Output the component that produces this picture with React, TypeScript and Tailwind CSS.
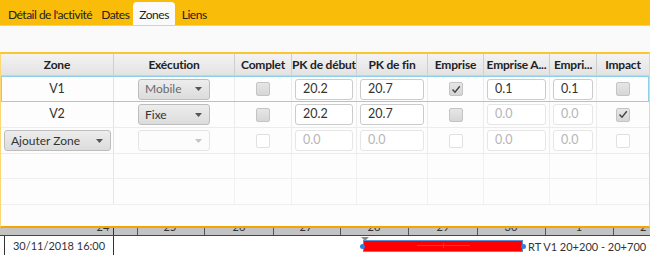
import React from "react";

const font = { fontFamily: 'Lato, "Noto Sans", Arial, sans-serif' };
const gridCols = "grid grid-cols-[113px_121px_57px_65px_71px_56px_66px_47px_1fr]";

const headers = ["Zone", "Exécution", "Complet", "PK de début", "PK de fin", "Emprise", "Emprise A...", "Empri...", "Impact"];

function Arrow({ light }: { light?: boolean }) {
  return (
    <svg width="7" height="4" viewBox="0 0 7 4" className="shrink-0">
      <path d="M0 0 L7 0 L3.5 4 Z" fill={light ? "#c4c4c4" : "#555"} />
    </svg>
  );
}

function Combo({ label, width, disabled, grayText }: { label?: string; width: string; disabled?: boolean; grayText?: boolean }) {
  return (
    <div
      className={`${width} h-[21px] flex items-center justify-between pl-[6px] pr-[7px] rounded-[3px] border text-[12px] ${
        disabled
          ? "border-[#e4e4e4] bg-[#fcfcfc]"
          : "border-[#bdbdbd] bg-gradient-to-b from-[#ededed] to-[#dcdcdc]"
      } ${grayText ? "text-[#6a6a6a]" : "text-[#333]"}`}
    >
      <span>{label}</span>
      <Arrow light={disabled} />
    </div>
  );
}

function Check({ checked, disabled }: { checked?: boolean; disabled?: boolean }) {
  return (
    <div
      className={`w-[14px] h-[14px] rounded-[2px] border flex items-center justify-center ${
        disabled ? "border-[#e0e0e0] bg-white" : "border-[#c4c4c4] bg-gradient-to-b from-[#e6e6e6] to-[#d6d6d6]"
      }`}
    >
      {checked && (
        <svg width="10" height="9" viewBox="0 0 10 9">
          <path d="M1.5 4.5 L4 7.2 L8.8 1.2" fill="none" stroke="#444" strokeWidth="1.4" />
        </svg>
      )}
    </div>
  );
}

function Field({ value, disabled }: { value: string; disabled?: boolean }) {
  return (
    <div
      className={`h-[21px] mx-[3px] flex items-center pl-[7px] rounded-[3px] border bg-white text-[12.5px] ${
        disabled ? "border-[#e6e6e6] text-[#b5b5b5]" : "border-[#cbcbcb] text-[#333]"
      }`}
    >
      {value}
    </div>
  );
}

function Cell({ children, last }: { children?: React.ReactNode; last?: boolean }) {
  return (
    <div className={`flex items-center justify-center ${last ? "" : "border-r border-[#ececec]"}`}>
      <div className="w-full flex justify-center">{children}</div>
    </div>
  );
}

function FieldCell({ value, disabled }: { value: string; disabled?: boolean }) {
  return (
    <div className="flex items-center border-r border-[#ececec]">
      <div className="w-full">
        <Field value={value} disabled={disabled} />
      </div>
    </div>
  );
}

type Row = {
  zone: string;
  exec: string;
  pk1: string;
  pk2: string;
  emprise: boolean;
  ea: string;
  eb: string;
  impact: boolean;
  emprDisabled: boolean;
};

const rows: Row[] = [
  { zone: "V1", exec: "Mobile", pk1: "20.2", pk2: "20.7", emprise: true, ea: "0.1", eb: "0.1", impact: false, emprDisabled: false },
  { zone: "V2", exec: "Fixe", pk1: "20.2", pk2: "20.7", emprise: false, ea: "0.0", eb: "0.0", impact: true, emprDisabled: true },
];

function DataRow({ r, selected }: { r: Row; selected?: boolean }) {
  return (
    <div
      className={`${gridCols} h-[26px] ${
        selected ? "outline outline-1 -outline-offset-1 outline-[#8fd0e8]" : "border-b border-[#ececec]"
      }`}
    >
      <div className="flex items-center justify-center border-r border-[#e2e2e2] text-[12.5px] text-[#333]">{r.zone}</div>
      <Cell>
        <Combo label={r.exec} width="w-[72px]" grayText={r.exec === "Mobile"} />
      </Cell>
      <Cell>
        <Check />
      </Cell>
      <FieldCell value={r.pk1} />
      <FieldCell value={r.pk2} />
      <Cell>
        <Check checked={r.emprise} />
      </Cell>
      <FieldCell value={r.ea} disabled={r.emprDisabled} />
      <FieldCell value={r.eb} disabled={r.emprDisabled} />
      <Cell last>
        <Check checked={r.impact} />
      </Cell>
    </div>
  );
}

function EmptyRow({ h }: { h: string }) {
  return (
    <div className={`${gridCols} ${h} border-b border-[#efefef]`}>
      <div className="border-r border-[#e6e6e6]" />
      {[0, 1, 2, 3, 4, 5, 6].map((i) => (
        <div key={i} className="border-r border-[#f1f1f1]" />
      ))}
      <div />
    </div>
  );
}

const ticks = [
  { x: 137, label: "24" },
  { x: 204, label: "25" },
  { x: 273, label: "26" },
  { x: 340, label: "27" },
  { x: 408, label: "28" },
  { x: 477, label: "29" },
  { x: 545, label: "30" },
  { x: 613, label: "1" },
];

export default function App() {
  return (
    <div className="w-[650px] h-[255px] overflow-hidden bg-white flex flex-col" style={font}>
      {/* tab bar */}
      <div className="h-[25px] bg-[#f9bc08] flex items-end pl-[3px] text-[12px] tracking-[-0.5px] text-[#222] shrink-0">
        <div className="h-[23px] flex items-center pl-[5px] pr-[5px] pt-[2px]">Détail de l'activité</div>
        <div className="h-[23px] flex items-center px-[4px] pt-[2px]">Dates</div>
        <div className="h-[23px] flex items-center px-[6px] pt-[2px] bg-[#fafafa] rounded-t-[4px]">Zones</div>
        <div className="h-[23px] flex items-center px-[7px] pt-[2px]">Liens</div>
      </div>
      <div className="h-[27px] bg-[#fafafa] border-t border-[#fbd35a] shrink-0" />

      {/* table panel */}
      <div className="h-[176px] shrink-0 border-t-2 border-t-[#fbc62c] border-x border-x-[#fcd774] border-b-2 border-b-[#f5a400] bg-[#fdfdfd] flex flex-col">
        <div className={`${gridCols} h-[22px] bg-gradient-to-b from-[#f3f3f3] to-[#e3e3e3] border-b border-[#d0d0d0]`}>
          {headers.map((h, i) => (
            <div
              key={h}
              className={`flex items-center justify-center text-[12px] tracking-[-0.2px] font-bold text-[#222] whitespace-nowrap overflow-hidden ${
                i < headers.length - 1 ? "border-r border-[#cfcfcf]" : ""
              }`}
            >
              {h}
            </div>
          ))}
        </div>
        <DataRow r={rows[0]} selected />
        <DataRow r={rows[1]} />
        <div className={`${gridCols} h-[26px] border-b border-[#ececec]`}>
          <div className="flex items-center pl-[3px] border-r border-[#e2e2e2]">
            <Combo label="Ajouter Zone" width="w-[107px]" />
          </div>
          <Cell>
            <Combo width="w-[72px]" disabled />
          </Cell>
          <Cell>
            <Check disabled />
          </Cell>
          <FieldCell value="0.0" disabled />
          <FieldCell value="0.0" disabled />
          <Cell>
            <Check disabled />
          </Cell>
          <FieldCell value="0.0" disabled />
          <FieldCell value="0.0" disabled />
          <Cell last>
            <Check disabled />
          </Cell>
        </div>
        <EmptyRow h="h-[25px]" />
        <EmptyRow h="h-[26px]" />
        <div className="flex-1" />
      </div>

      {/* timeline */}
      <div className="relative h-[8px] bg-[#c3c3c3] border-b border-[#444] shrink-0 overflow-hidden">
        <div className="absolute left-[113px] top-0 bottom-0 w-px bg-[#333]" />
        {ticks.map((t) => (
          <React.Fragment key={t.x}>
            <div className="absolute top-0 bottom-0 w-px bg-[#555]" style={{ left: t.x }} />
            <div
              className="absolute top-[-7px] text-[11px] leading-[12px] text-[#333] w-[40px] text-center"
              style={{ left: t.x - 54 }}
            >
              {t.label}
            </div>
          </React.Fragment>
        ))}
        <div className="absolute top-[-7px] left-[640px] text-[11px] leading-[12px] text-[#333]">2</div>
      </div>
      <div className="relative flex-1 flex">
        <div className="w-[4px]" />
        <div className="w-[110px] border-l border-r border-[#333] flex items-center justify-center pt-[2px] text-[11px] text-[#333] whitespace-nowrap">
          30/11/2018 16:00
        </div>
        <div className="absolute left-[361px] top-[1px] w-0 h-0 border-l-[4px] border-r-[4px] border-t-[4px] border-l-transparent border-r-transparent border-t-[#8a8a8a]" />
        <div className="absolute left-[363px] top-[4px] w-[160px] h-[12px] bg-[#ff0000] border border-[#5b8fd6]">
          <div className="absolute left-[53px] top-[4px] w-[53px] h-px bg-[#4a6fd0]" />
          <div className="absolute left-[79px] top-[2px] w-px h-[5px] bg-[#4a6fd0]" />
        </div>
        <div className="absolute left-[360px] top-[8px] w-[5px] h-[5px] rounded-full bg-[#2f7fe0]" />
        <div className="absolute left-[521px] top-[8px] w-[5px] h-[5px] rounded-full bg-[#2f7fe0]" />
        <div className="absolute left-[528px] top-[3px] text-[11px] text-[#333] whitespace-nowrap">RT V1 20+200 - 20+700</div>
      </div>
    </div>
  );
}
